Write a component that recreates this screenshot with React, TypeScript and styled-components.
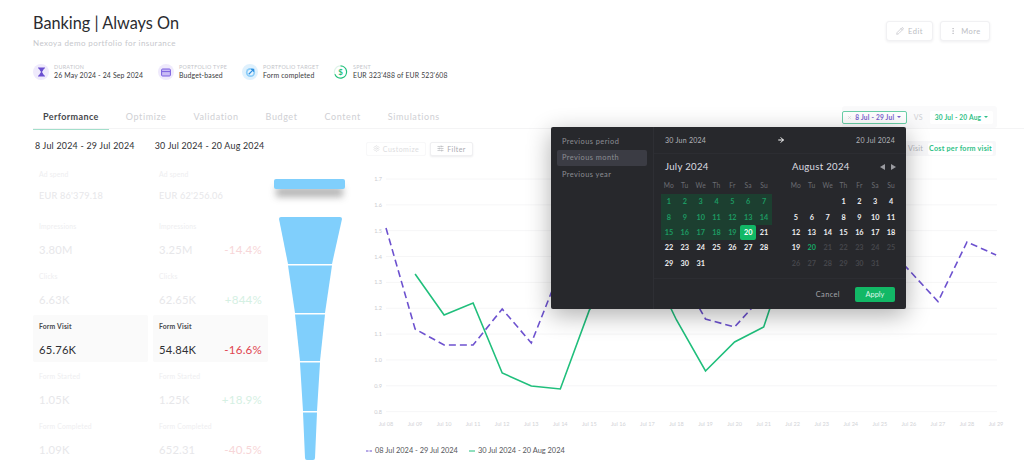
import React from "react";
import styled, { createGlobalStyle } from "styled-components";
import { Pencil, MoreVertical, Settings, SlidersHorizontal, ArrowRight, X } from "lucide-react";

const Global = createGlobalStyle`
  html, body { margin: 0; padding: 0; background: #fff; }
  body { font-family: "Lato", "Noto Sans", sans-serif; }
  * { box-sizing: border-box; }
`;

const Page = styled.div`
  position: relative;
  width: 1024px;
  height: 476px;
  overflow: hidden;
  background: #fff;
  color: #2e2f33;
`;
const Header = styled.header`
  display: flex;
  justify-content: space-between;
  padding: 13px 34px 0 33px;
`;
const Title = styled.h1`
  margin: 0;
  font-size: 16.3px;
  line-height: 20px;
  font-weight: 400;
  color: #2b2c30;
`;
const Subtitle = styled.p`
  margin: 5px 0 0;
  font-size: 8px;
  line-height: 10px;
  color: #c6c7cc;
  letter-spacing: 0.42px;
`;
const HeaderActions = styled.div`
  display: flex;
  gap: 7px;
  padding-top: 8px;
`;
const GhostButton = styled.button<{ $w: number }>`
  width: ${(p) => p.$w}px;
  height: 20px;
  display: flex;
  align-items: center;
  justify-content: center;
  gap: 4px;
  background: #fff;
  border: 1px solid #f1f1f3;
  border-radius: 3px;
  box-shadow: 0 1px 3px rgba(30, 30, 50, 0.07);
  font: inherit;
  font-size: 7.5px;
  letter-spacing: 0.5px;
  color: #bcbdc3;
  padding: 0;
`;
const Meta = styled.div`
  display: flex;
  margin: 14px 0 22px;
  padding-left: 33px;
  height: 20px;
`;
const MetaItem = styled.div<{ $w: number }>`
  width: ${(p) => p.$w}px;
  display: flex;
  align-items: center;
  gap: 5px;
`;
const IconCircle = styled.span<{ $bg: string }>`
  width: 16px;
  height: 16px;
  border-radius: 50%;
  display: flex;
  align-items: center;
  justify-content: center;
  background: ${(p) => p.$bg};
  flex: none;
`;
const MetaLabel = styled.div`
  font-size: 5.4px;
  line-height: 7px;
  color: #c4c5ca;
  letter-spacing: 0.3px;
  text-transform: uppercase;
`;
const MetaValue = styled.div`
  font-size: 6.9px;
  line-height: 9px;
  color: #3a3b40;
  letter-spacing: 0.15px;
  white-space: nowrap;
`;
const TabsRow = styled.div`
  display: flex;
  justify-content: space-between;
  align-items: flex-start;
  height: 25px;
  padding: 2px 27px 0 33px;
  position: relative;
`;
const TabsLine = styled.div`
  position: absolute;
  left: 33px;
  right: 0;
  bottom: 0;
  height: 1px;
  background: #f4f4f5;
`;
const Tabs = styled.nav`
  display: flex;
  gap: 27px;
  height: 23px;
`;
const Tab = styled.span<{ $active?: boolean }>`
  position: relative;
  font-size: 9px;
  line-height: 22px;
  letter-spacing: ${(p) => (p.$active ? "0.4px" : "0.6px")};
  color: ${(p) => (p.$active ? "#46474c" : "#cfd0d4")};
  margin: ${(p) => (p.$active ? "0 0 0 10px" : "0")};
  font-weight: ${(p) => (p.$active ? 700 : 400)};
  &::after {
    content: "";
    display: ${(p) => (p.$active ? "block" : "none")};
    position: absolute;
    left: -10px;
    right: -10px;
    bottom: -1px;
    height: 1.5px;
    background: #a3dfcb;
  }
`;
const PickerGroup = styled.div`
  display: flex;
  align-items: center;
  gap: 7px;
  height: 22px;
  padding: 0 4px 0 0;
  background: #fafafb;
  border-radius: 3px;
`;
const Picker = styled.div<{ $active?: boolean; $c: string }>`
  width: ${(p) => (p.$active ? 65 : 63)}px;
  height: 13px;
  display: flex;
  align-items: center;
  justify-content: center;
  gap: 3px;
  background: #fff;
  border: ${(p) => (p.$active ? "1px solid #6ad0a8" : "none")};
  border-radius: 2px;
  font-size: 6.6px;
  font-weight: 700;
  letter-spacing: 0.2px;
  color: ${(p) => p.$c};
  white-space: nowrap;
`;
const Caret = styled.span`
  width: 0;
  height: 0;
  border-left: 2px solid transparent;
  border-right: 2px solid transparent;
  border-top: 2.5px solid currentColor;
`;
const Vs = styled.span`
  font-size: 7px;
  color: #cfd0d4;
  letter-spacing: 0.4px;
`;
const Content = styled.main`
  display: flex;
`;
const LeftColumn = styled.section`
  width: 366px;
  padding-left: 33px;
  flex: none;
`;
const DateHeads = styled.div`
  display: flex;
  gap: 20px;
  padding: 11px 0 0 2px;
  height: 34px;
  font-size: 8.9px;
  line-height: 12px;
  letter-spacing: 0.22px;
  color: #2f3034;
`;
const KpiArea = styled.div`
  display: flex;
  gap: 5px;
`;
const KpiColumn = styled.div`
  width: 115px;
  display: flex;
  flex-direction: column;
  gap: 3px;
  & > div:first-child { margin-bottom: 2px; }
  & > div:first-child > div:last-child { margin-top: 9px; }
  & > div:first-child span { font-size: 9.2px; }
`;
const KpiCard = styled.div<{ $focus?: boolean }>`
  height: 47px;
  padding: 7px 6px 0;
  border-radius: 2px;
  background: ${(p) => (p.$focus ? "#fafafa" : "transparent")};
`;
const KpiLabel = styled.div<{ $focus?: boolean }>`
  font-size: 6.8px;
  line-height: 9px;
  letter-spacing: 0.2px;
  font-weight: ${(p) => (p.$focus ? 700 : 400)};
  color: ${(p) => (p.$focus ? "#47484c" : "#eeeef0")};
`;
const KpiValues = styled.div`
  display: flex;
  justify-content: space-between;
  align-items: center;
  margin-top: 11px;
  height: 14px;
`;
const KpiValue = styled.span<{ $focus?: boolean }>`
  font-size: 11.2px;
  letter-spacing: 0.2px;
  color: ${(p) => (p.$focus ? "#2f3034" : "#e7e7ea")};
`;
const KpiDelta = styled.span<{ $up: boolean; $focus?: boolean }>`
  font-size: 11.6px;
  letter-spacing: 0.2px;
  color: ${(p) => (p.$focus ? "#e0454f" : p.$up ? "#d5f0e3" : "#f7d6d8")};
`;
const FunnelSvg = styled.svg`
  display: block;
  flex: none;
  margin-top: 7px;
  overflow: visible;
`;
const RightColumn = styled.section`
  flex: 1;
  min-width: 0;
`;
const Toolbar = styled.div`
  display: flex;
  align-items: center;
  height: 15px;
  margin-top: 12px;
  padding-right: 28px;
  gap: 4px;
`;
const ToolButton = styled.button<{ $w: number; $faded?: boolean }>`
  width: ${(p) => p.$w}px;
  height: 14px;
  display: flex;
  align-items: center;
  justify-content: center;
  gap: 3px;
  padding: 0;
  background: #fff;
  border: 1px solid ${(p) => (p.$faded ? "#f8f8f9" : "#f0f0f2")};
  border-radius: 2px;
  box-shadow: ${(p) => (p.$faded ? "none" : "0 1px 2px rgba(30,30,50,.08)")};
  font: inherit;
  font-size: 7px;
  letter-spacing: 0.45px;
  color: ${(p) => (p.$faded ? "#dcdce0" : "#a9aab0")};
`;
const Segments = styled.div`
  margin-left: auto;
  display: flex;
  align-items: center;
  gap: 4px;
  height: 15px;
  padding: 0 3px 0 20px;
  background: #f7f7f9;
  border-radius: 2px;
  font-size: 7.2px;
  white-space: nowrap;
`;
const Segment = styled.span<{ $on?: boolean }>`
  padding: 0 1px;
  height: 12px;
  line-height: 12px;
  border-radius: 2px;
  background: ${(p) => (p.$on ? "#fff" : "transparent")};
  color: ${(p) => (p.$on ? "#2fbf86" : "#b5b6bc")};
  font-weight: ${(p) => (p.$on ? 700 : 400)};
  letter-spacing: 0.22px;
`;
const ChartSvg = styled.svg`
  display: block;
  margin-top: 14px;
`;
const Dialog = styled.div`
  position: absolute;
  left: 551px;
  top: 127px;
  width: 355px;
  height: 182px;
  display: flex;
  background: #27282c;
  border-radius: 2px;
  box-shadow: 0 6px 24px rgba(0, 0, 0, 0.32);
  color: #fff;
`;
const Presets = styled.div`
  width: 103px;
  padding: 6.5px 6px 0;
  border-right: 1px solid #2e2f34;
  display: flex;
  flex-direction: column;
  flex: none;
`;
const Preset = styled.div<{ $on?: boolean }>`
  height: 16px;
  line-height: 16px;
  margin-bottom: 0.5px;
  padding-left: 5px;
  border-radius: 2px;
  font-size: 7.4px;
  letter-spacing: 0.45px;
  color: #8c8d93;
  background: ${(p) => (p.$on ? "#3b3c44" : "transparent")};
`;
const CalPane = styled.div`
  flex: 1;
  display: flex;
  flex-direction: column;
  min-width: 0;
`;
const RangeBar = styled.div`
  height: 27px;
  padding: 0 11px;
  display: flex;
  align-items: center;
  justify-content: space-between;
  border-bottom: 1px solid #2c2d32;
  font-size: 7px;
  letter-spacing: 0.25px;
  color: #b4b5ba;
`;
const Months = styled.div`
  flex: 1;
  display: flex;
  gap: 16px;
  padding: 5px 0 0 7px;
  border-bottom: 1px solid #2c2d32;
`;
const Month = styled.div`
  width: 111px;
  position: relative;
`;
const MonthTitle = styled.div`
  font-size: 9.6px;
  line-height: 16px;
  letter-spacing: 0.3px;
  color: #dcdce0;
  padding-left: 4px;
`;
const WeekRow = styled.div`
  display: grid;
  grid-template-columns: repeat(7, 15.86px);
  height: 15px;
  margin: 2px 0 2px;
`;
const Grid = styled.div`
  display: grid;
  grid-template-columns: repeat(7, 15.86px);
  grid-auto-rows: 15.4px;
`;
const Weekday = styled.div`
  display: flex;
  align-items: center;
  justify-content: center;
  font-size: 6.7px;
  color: #6c6d73;
  letter-spacing: 0.2px;
`;
type State = "plain" | "range" | "selected" | "end" | "off" | "empty";
const dayColor: Record<State, string> = {
  plain: "#eeeef0",
  range: "#1c9a62",
  selected: "#fff",
  end: "#16a765",
  off: "#45464b",
  empty: "transparent",
};
const Day = styled.div<{ $s: State }>`
  display: flex;
  align-items: center;
  justify-content: center;
  font-size: 7.3px;
  font-weight: 700;
  color: ${(p) => dayColor[p.$s]};
  background: ${(p) => (p.$s === "range" ? "#1c3f30" : p.$s === "selected" ? "#12b866" : "transparent")};
  border-radius: ${(p) => (p.$s === "selected" ? "2px" : "0")};
`;
const MonthNav = styled.div`
  position: absolute;
  right: 3px;
  top: 5px;
  display: flex;
  gap: 6px;
`;
const NavTri = styled.span<{ $left?: boolean }>`
  width: 0;
  height: 0;
  border-top: 3px solid transparent;
  border-bottom: 3px solid transparent;
  ${(p) => (p.$left ? "border-right: 5px solid #9a9ba0;" : "border-left: 5px solid #9a9ba0;")}
`;
const Footer = styled.div`
  height: 30px;
  padding: 0 11px 0 0;
  display: flex;
  align-items: center;
  justify-content: flex-end;
  gap: 15px;
  font-size: 7.4px;
  letter-spacing: 0.4px;
`;
const Cancel = styled.span`
  color: #a4a5aa;
`;
const Apply = styled.button`
  width: 40px;
  height: 15px;
  border: 0;
  border-radius: 2px;
  background: #12b866;
  color: #dff7ea;
  font: inherit;
  padding: 0;
`;
const Legend = styled.div`
  position: absolute;
  left: 366px;
  top: 446px;
  display: flex;
  gap: 11px;
  font-size: 7.4px;
  line-height: 10px;
  color: #55565b;
`;
const LegendItem = styled.span`
  display: flex;
  align-items: center;
  gap: 2px;
`;

const kpis = [
  { l: "Ad spend", a: "EUR 86'379.18", b: "EUR 62'256.06" },
  { l: "Impressions", a: "3.80M", b: "3.25M", d: "-14.4%" },
  { l: "Clicks", a: "6.63K", b: "62.65K", d: "+844%", up: true },
  { l: "Form Visit", a: "65.76K", b: "54.84K", d: "-16.6%", focus: true },
  { l: "Form Started", a: "1.05K", b: "1.25K", d: "+18.9%", up: true },
  { l: "Form Completed", a: "1.09K", b: "652.31", d: "-40.5%" },
];

const funnel = [
  "M279 219 q0-2 2-2 h59 q2 0 2 2 L332 264 H288 Z",
  "M288 265.5 H332 L325 313 H295 Z",
  "M295 314.5 H325 L320 361 H300 Z",
  "M300 362.5 H320 L317 411 H303 Z",
  "M303 412.5 H317 L315 458 q0 2-2 2 h-6 q-2 0-2-2 Z",
];

const ticks = ["1.7", "1.6", "1.5", "1.4", "1.3", "1.2", "1.1", "1.0", "0.9", "0.8"];
const days = Array.from({ length: 22 }, (_, i) => i + 8);
const px = (i: number) => 386 + i * 29.05;
const purple = [228, 329, 345, 345, 309, 343, 270, 230, 240, 250, 268, 319, 327, 295, 250, 230, 220, 240, 270, 301.6, 242, 255];
const green = [null, 274, 315, 303, 373, 386, 389, 310, 270, 260, 320, 371, 342, 327, 240];
const line = (ys: (number | null)[]) =>
  ys
    .map((y, i) => (y === null ? null : `${px(i).toFixed(1)},${y}`))
    .filter(Boolean)
    .join(" ");

const weekdays = ["Mo", "Tu", "We", "Th", "Fr", "Sa", "Su"];

function julyState(d: number): State {
  if (d < 20) return "range";
  if (d === 20) return "selected";
  return "plain";
}
function augState(d: number): State {
  if (d < 20) return "plain";
  if (d === 20) return "end";
  return "off";
}

function CalMonth({ title, blanks, count, state, nav }: { title: string; blanks: number; count: number; state: (d: number) => State; nav?: boolean }) {
  return (
    <Month>
      <MonthTitle>{title}</MonthTitle>
      {nav && (
        <MonthNav>
          <NavTri $left />
          <NavTri />
        </MonthNav>
      )}
      <WeekRow>
        {weekdays.map((w) => (
          <Weekday key={w}>{w}</Weekday>
        ))}
      </WeekRow>
      <Grid>
        {Array.from({ length: blanks }, (_, i) => (
          <Day key={"b" + i} $s="empty" />
        ))}
        {Array.from({ length: count }, (_, i) => (
          <Day key={i} $s={state(i + 1)}>
            {i + 1}
          </Day>
        ))}
      </Grid>
    </Month>
  );
}

export default function App() {
  return (
    <Page>
      <Global />
      <Header>
        <div>
          <Title>Banking | Always On</Title>
          <Subtitle>Nexoya demo portfolio for insurance</Subtitle>
        </div>
        <HeaderActions>
          <GhostButton $w={47}>
            <Pencil size={8} /> Edit
          </GhostButton>
          <GhostButton $w={50}>
            <MoreVertical size={8} /> More
          </GhostButton>
        </HeaderActions>
      </Header>

      <Meta>
        <MetaItem $w={125}>
          <IconCircle $bg="#efeafc">
            <svg width="9" height="10" viewBox="0 0 9 10">
              <path d="M1 .5 H8 V1.5 H7.2 L5 5 L7.2 8.5 H8 V9.5 H1 V8.5 H1.8 L4 5 L1.8 1.5 H1 Z" fill="#6a4fd0" />
            </svg>
          </IconCircle>
          <div>
            <MetaLabel>Duration</MetaLabel>
            <MetaValue>26 May 2024 - 24 Sep 2024</MetaValue>
          </div>
        </MetaItem>
        <MetaItem $w={84}>
          <IconCircle $bg="#efeafc">
            <svg width="10" height="9" viewBox="0 0 10 9">
              <rect x=".6" y="1" width="8.8" height="7" rx="1" fill="#c9bcf5" stroke="#7a5fe0" strokeWidth="1" />
              <path d="M1 3.6 H9" stroke="#7a5fe0" strokeWidth="1" />
            </svg>
          </IconCircle>
          <div>
            <MetaLabel>Portfolio type</MetaLabel>
            <MetaValue>Budget-based</MetaValue>
          </div>
        </MetaItem>
        <MetaItem $w={91}>
          <IconCircle $bg="#dff1fd">
            <svg width="11" height="11" viewBox="0 0 10 10">
              <circle cx="5" cy="5" r="4.2" fill="#8ccdf8" />
              <circle cx="5" cy="5" r="2.6" fill="#e6f4fe" />
              <path d="M3.4 6.6 L7.6 2.4 M5.6 2.2 H7.8 V4.4" fill="none" stroke="#2f8fe0" strokeWidth="1.1" />
            </svg>
          </IconCircle>
          <div>
            <MetaLabel>Portfolio target</MetaLabel>
            <MetaValue>Form completed</MetaValue>
          </div>
        </MetaItem>
        <MetaItem $w={140}>
          <svg width="15" height="16" viewBox="0 0 16 16">
            <path d="M2 10.5 A6.5 6.5 0 0 1 8 1.5" fill="none" stroke="#dff4ea" strokeWidth="1.3" />
            <path d="M8 1.5 A6.5 6.5 0 1 1 2 10.5" fill="none" stroke="#1fbf7a" strokeWidth="1.3" />
            <text x="8" y="11" textAnchor="middle" fontSize="8.5" fontWeight="700" fill="#1fbf7a" fontFamily="Lato, sans-serif">$</text>
          </svg>
          <div>
            <MetaLabel>Spent</MetaLabel>
            <MetaValue>EUR 323'488 of EUR 523'608</MetaValue>
          </div>
        </MetaItem>
      </Meta>

      <TabsRow>
        <TabsLine />
        <Tabs>
          <Tab $active>Performance</Tab>
          <Tab>Optimize</Tab>
          <Tab>Validation</Tab>
          <Tab>Budget</Tab>
          <Tab>Content</Tab>
          <Tab>Simulations</Tab>
        </Tabs>
        <PickerGroup>
          <Picker $active $c="#7a5fd0">
            <X size={5} color="#c9c9ce" /> 8 Jul - 29 Jul <Caret />
          </Picker>
          <Vs>VS</Vs>
          <Picker $c="#2fbf86">
            30 Jul - 20 Aug <Caret />
          </Picker>
        </PickerGroup>
      </TabsRow>

      <Content>
        <LeftColumn>
          <DateHeads>
            <span>8 Jul 2024 - 29 Jul 2024</span>
            <span>30 Jul 2024 - 20 Aug 2024</span>
          </DateHeads>
          <KpiArea>
            <KpiColumn>
              {kpis.map((k) => (
                <KpiCard key={k.l} $focus={k.focus}>
                  <KpiLabel $focus={k.focus}>{k.l}</KpiLabel>
                  <KpiValues>
                    <KpiValue $focus={k.focus}>{k.a}</KpiValue>
                  </KpiValues>
                </KpiCard>
              ))}
            </KpiColumn>
            <KpiColumn>
              {kpis.map((k) => (
                <KpiCard key={k.l} $focus={k.focus}>
                  <KpiLabel $focus={k.focus}>{k.l}</KpiLabel>
                  <KpiValues>
                    <KpiValue $focus={k.focus}>{k.b}</KpiValue>
                    {k.d && (
                      <KpiDelta $up={!!k.up} $focus={k.focus}>
                        {k.d}
                      </KpiDelta>
                    )}
                  </KpiValues>
                </KpiCard>
              ))}
            </KpiColumn>
            <FunnelSvg width="77" height="300" viewBox="273 170 77 300">
              <defs>
                <filter id="blurShadow" x="-20%" y="-150%" width="140%" height="400%">
                  <feGaussianBlur stdDeviation="3.5" />
                </filter>
              </defs>
              <rect x="276" y="187" width="67" height="10" fill="#6a6a6a" opacity="0.5" filter="url(#blurShadow)" />
              <rect x="274" y="179" width="71" height="10" rx="2" fill="#80cffc" />
              {funnel.map((d) => (
                <path key={d} d={d} fill="#80cffc" />
              ))}
            </FunnelSvg>
          </KpiArea>
        </LeftColumn>

        <RightColumn>
          <Toolbar>
            <ToolButton $w={60} $faded>
              <Settings size={7} /> Customize
            </ToolButton>
            <ToolButton $w={43}>
              <SlidersHorizontal size={7} /> Filter
            </ToolButton>
            <Segments>
              <Segment>Form Visit</Segment>
              <Segment $on>Cost per form visit</Segment>
            </Segments>
          </Toolbar>
          <ChartSvg width="658" height="306" viewBox="366 170 658 306">
            {ticks.map((t, i) => {
              const y = 179 + i * 25.85;
              return (
                <g key={t}>
                  <line x1="386" x2="997" y1={y} y2={y} stroke="#f6f6f7" strokeWidth="1" />
                  <text x="378" y={y + 2} textAnchor="middle" fontSize="5.5" fill="#c9cacf" fontFamily="Lato, sans-serif">
                    {t}
                  </text>
                </g>
              );
            })}
            {days.map((d, i) => (
              <text key={d} x={px(i)} y="426" textAnchor="middle" fontSize="5.6" fill="#d2d3d7" fontFamily="Lato, sans-serif">
                Jul {String(d).padStart(2, "0")}
              </text>
            ))}
            <polyline points={line(purple)} fill="none" stroke="#6d52cf" strokeWidth="1.6" strokeDasharray="7 4" />
            <polyline points={line(green)} fill="none" stroke="#20bf7c" strokeWidth="1.6" />
          </ChartSvg>
        </RightColumn>
      </Content>

      <Legend>
        <LegendItem>
          <svg width="7" height="6" viewBox="0 0 7 6">
            <path d="M0 3 H6" stroke="#6d52cf" strokeWidth="1" strokeDasharray="2.5 1" />
          </svg>
          08 Jul 2024 - 29 Jul 2024
        </LegendItem>
        <LegendItem>
          <svg width="7" height="6" viewBox="0 0 7 6">
            <path d="M0 3 H6" stroke="#20bf7c" strokeWidth="1" />
          </svg>
          30 Jul 2024 - 20 Aug 2024
        </LegendItem>
      </Legend>

      <Dialog>
        <Presets>
          <Preset>Previous period</Preset>
          <Preset $on>Previous month</Preset>
          <Preset>Previous year</Preset>
        </Presets>
        <CalPane>
          <RangeBar>
            <span>30 Jun 2024</span>
            <ArrowRight size={8} color="#fff" strokeWidth={3} />
            <span>20 Jul 2024</span>
          </RangeBar>
          <Months>
            <CalMonth title="July 2024" blanks={0} count={31} state={julyState} />
            <CalMonth title="August 2024" blanks={3} count={31} state={augState} nav />
          </Months>
          <Footer>
            <Cancel>Cancel</Cancel>
            <Apply>Apply</Apply>
          </Footer>
        </CalPane>
      </Dialog>
    </Page>
  );
}
